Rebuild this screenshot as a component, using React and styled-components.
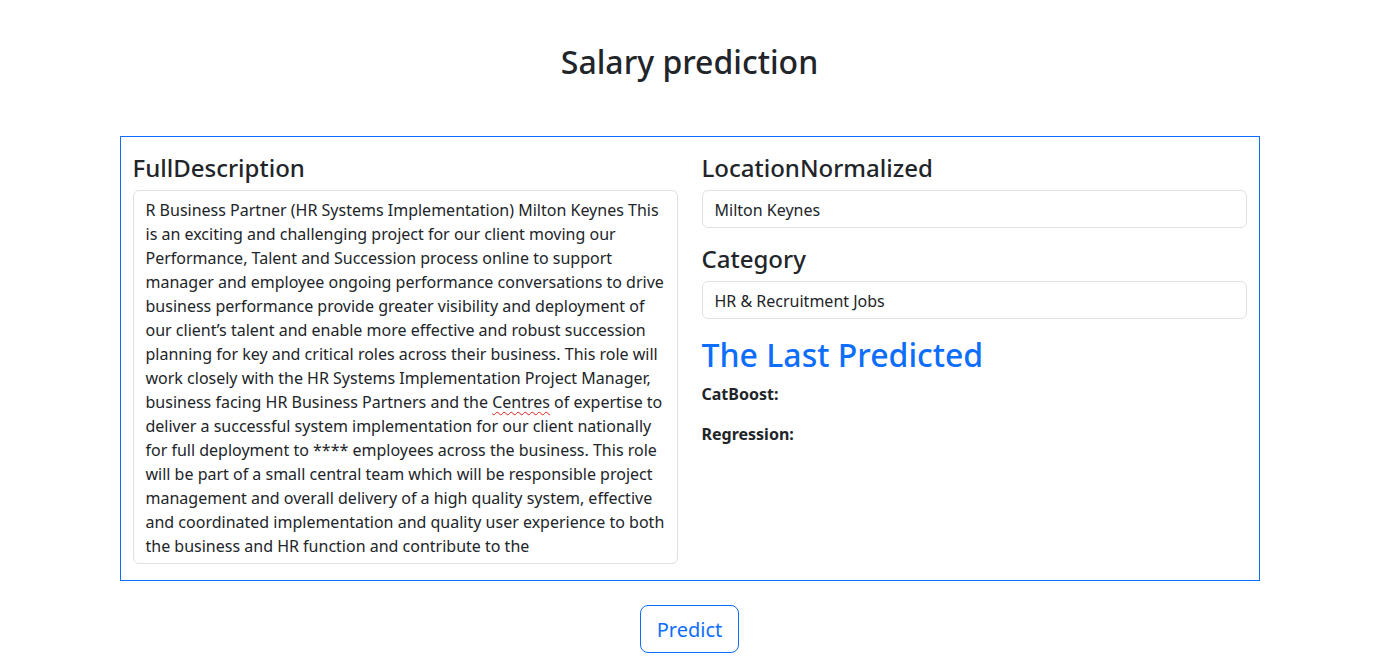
import React from "react";
import styled, { createGlobalStyle } from "styled-components";

const GlobalStyle = createGlobalStyle`
  *, *::before, *::after {
    box-sizing: border-box;
  }
  body {
    margin: 0;
    font-family: "Noto Sans", "Liberation Sans", sans-serif;
    font-size: 16px;
    line-height: 1.5;
    color: #212529;
    background: #fff;
  }
`;

const Page = styled.div`
  display: flex;
  flex-direction: column;
  align-items: center;
  padding: 43px 0 0 4px;
`;

const Title = styled.h2`
  margin: 0 0 55px;
  font-size: 32px;
  font-weight: 500;
  line-height: 1.2;
`;

const Card = styled.form`
  width: 1140px;
  border: 1px solid #0d6efd;
  padding: 16px 12px 16px;
  display: grid;
  grid-template-columns: 1fr 1fr;
  gap: 24px;
  align-items: start;
`;

const Column = styled.div`
  display: flex;
  flex-direction: column;
`;

const Label = styled.h4`
  margin: 0 0 7px;
  padding-top: 1px;
  font-size: 24px;
  font-weight: 500;
  line-height: 1.2;
`;

const Field = styled.div`
  border: 1px solid #dee2e6;
  border-radius: 6px;
  padding: 7px 12px 5px;
  font-size: 16px;
  line-height: 24px;
  color: #212529;
  background: #fff;
  margin-bottom: ${(p) => (p.$last ? "0" : "16px")};
  height: ${(p) => (p.$rows ? `${p.$rows * 24 + 14}px` : "38px")};
  overflow: hidden;
  overflow-wrap: break-word;
`;

const Misspelled = styled.span`
  text-decoration: underline wavy #e0201b;
  text-decoration-thickness: 1px;
  text-underline-offset: 3px;
`;

const Result = styled.h2`
  margin: 0 0 8px;
  padding-top: 1px;
  font-size: 32px;
  font-weight: 500;
  line-height: 1.2;
  color: #0d6efd;
`;

const Metric = styled.p`
  margin: 0 0 16px;
  font-weight: 700;
`;

const PredictButton = styled.button`
  margin-top: 24px;
  font-family: inherit;
  font-size: 20px;
  line-height: 1.5;
  padding: 9px 16px 7px;
  border: 1px solid #0d6efd;
  border-radius: 8px;
  color: #0d6efd;
  background: transparent;
  cursor: pointer;
`;

const App = () => {
  return (
    <Page>
      <GlobalStyle />
      <Title>Salary prediction</Title>
      <Card onSubmit={(e) => e.preventDefault()}>
        <Column>
          <Label>FullDescription</Label>
          <Field $rows={15} $last>
            R Business Partner (HR Systems Implementation) Milton Keynes This
            is an exciting and challenging project for our client moving our
            Performance, Talent and Succession process online to support
            manager and employee ongoing performance conversations to drive
            business performance provide greater visibility and deployment of
            our client’s talent and enable more effective and robust
            succession planning for key and critical roles across their
            business. This role will work closely with the HR Systems
            Implementation Project Manager, business facing HR Business
            Partners and the <Misspelled>Centres</Misspelled> of expertise to
            deliver a successful system implementation for our client
            nationally for full deployment to **** employees across the
            business. This role will be part of a small central team which
            will be responsible project management and overall delivery of a
            high quality system, effective and coordinated implementation and
            quality user experience to both the business and HR function and
            contribute to the
          </Field>
        </Column>
        <Column>
          <Label>LocationNormalized</Label>
          <Field>Milton Keynes</Field>
          <Label>Category</Label>
          <Field>HR &amp; Recruitment Jobs</Field>
          <Result>The Last Predicted</Result>
          <Metric>CatBoost:</Metric>
          <Metric>Regression:</Metric>
        </Column>
      </Card>
      <PredictButton type="button">Predict</PredictButton>
    </Page>
  );
};

export default App;
